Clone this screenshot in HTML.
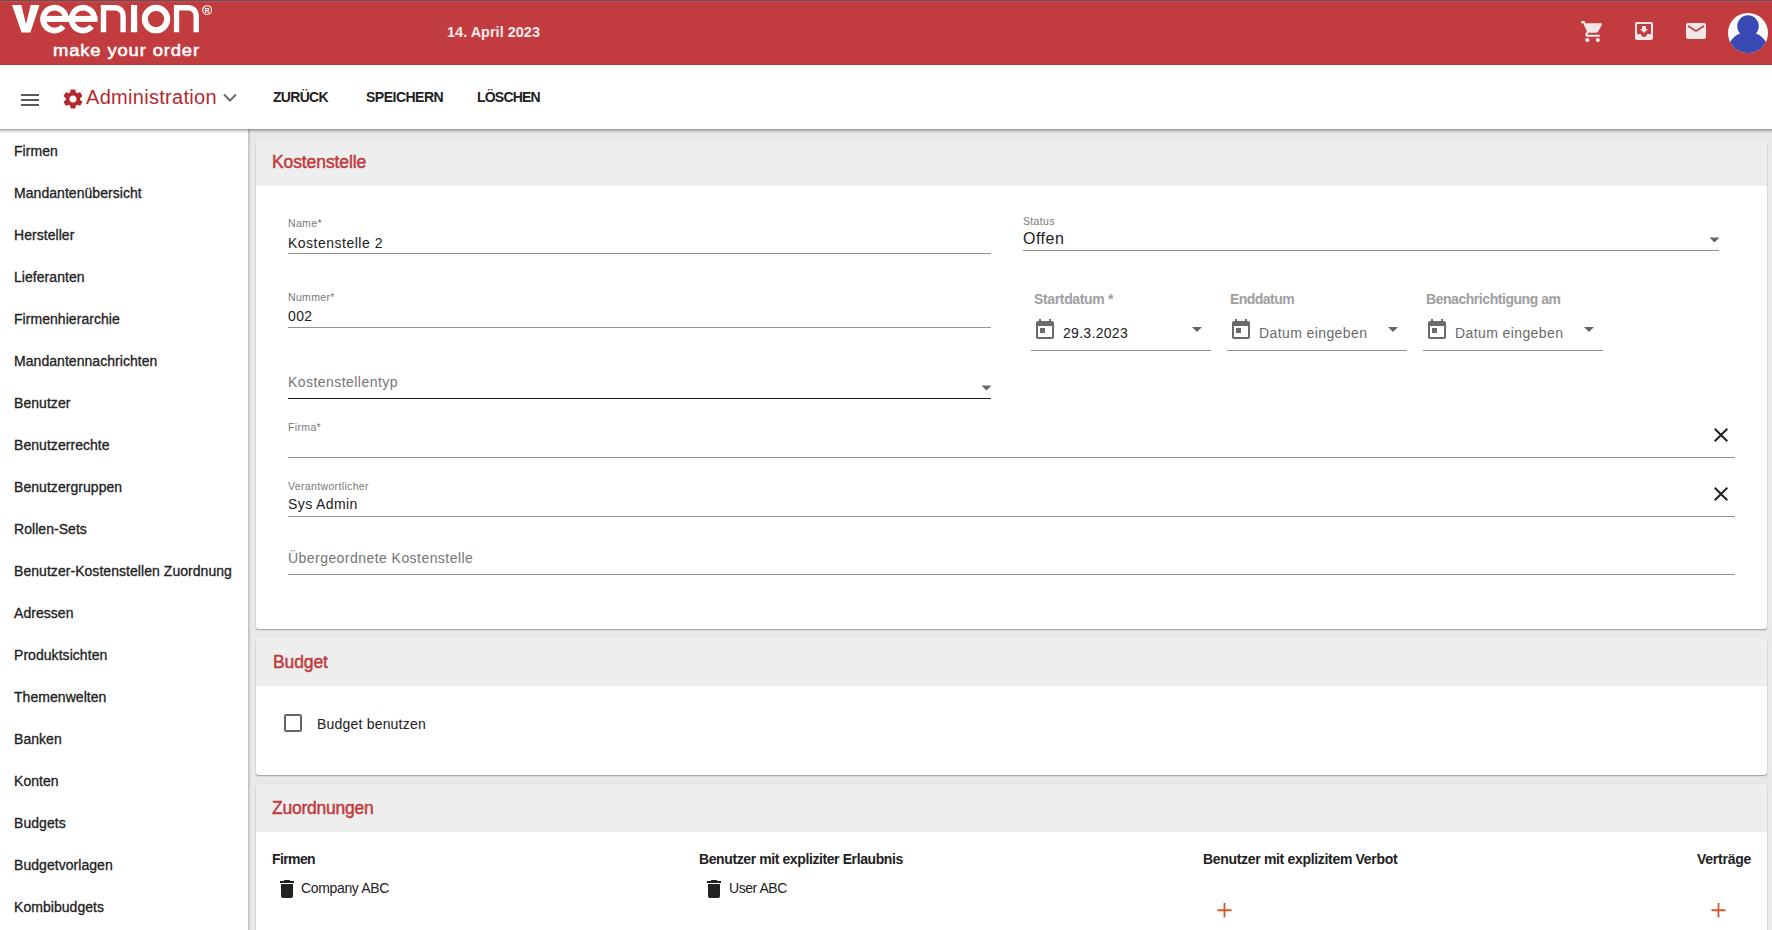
<!DOCTYPE html>
<html><head><meta charset="utf-8">
<style>
*{box-sizing:border-box;margin:0;padding:0}
html,body{width:1772px;height:930px;overflow:hidden;background:#fff;font-family:"Liberation Sans",sans-serif;color:#212121}
.a{position:absolute;white-space:nowrap}
#top{position:absolute;left:0;top:0;width:1772px;height:65px;background:#c23c3f;border-bottom:1px solid #b73b3d}
#topline{position:absolute;left:0;top:0;width:1772px;height:3px;background:linear-gradient(#86434a 0 1px,#a8535a 1px 2px,#bc4544 2px 3px)}
#tb{position:absolute;left:0;top:65px;width:1772px;height:64px;background:#fff}
#tbshadow{position:absolute;left:0;top:129px;width:1772px;height:5px;background:linear-gradient(rgba(0,0,0,0.32) 0 1px,rgba(0,0,0,0.2) 1px 2px,rgba(0,0,0,0.12) 2px 3px,rgba(0,0,0,0.05) 3px 4px,rgba(0,0,0,0.02) 4px 5px)}
#side{position:absolute;left:0;top:129px;width:248px;height:801px;background:#fff}
#main{position:absolute;left:248px;top:129px;width:1524px;height:801px;background:#e9e9e9}
#sideshadow{position:absolute;left:248px;top:129px;width:4px;height:801px;background:linear-gradient(90deg,#c3c3c3 0 1px,#d6d6d6 1px 2px,#e1e1e1 2px 3px,#e8e8e8 3px 4px)}
.si{position:absolute;left:14px;font-size:14px;-webkit-text-stroke:0.3px #212121;letter-spacing:0.05px;color:#212121;white-space:nowrap;line-height:16px}
.card{position:absolute;left:256px;width:1511px;background:#fff;border-radius:3px;box-shadow:0 1.5px 1.5px -0.5px rgba(0,0,0,0.32),-0.5px 0 1px -0.5px rgba(0,0,0,0.1),0.5px 0 1px -0.5px rgba(0,0,0,0.1)}
.ch{position:absolute;left:0;top:0;width:100%;background:#eeeeee;border-radius:3px 3px 0 0}
.ct{position:absolute;left:16px;font-size:17.5px;color:#c0393b;-webkit-text-stroke:0.45px #c0393b;line-height:20px;white-space:nowrap;letter-spacing:-0.1px}
.lbl{position:absolute;font-size:10.5px;color:#777;white-space:nowrap;line-height:12px;letter-spacing:0.35px}
.val{position:absolute;font-size:14px;color:#212121;white-space:nowrap;line-height:16px;letter-spacing:0.4px}
.ph{position:absolute;font-size:14px;color:#757575;white-space:nowrap;line-height:16px;letter-spacing:0.45px}
.ul{position:absolute;height:1px;background:#929292}
.btn{position:absolute;top:89px;font-size:14px;font-weight:bold;color:#212121;white-space:nowrap;line-height:16px;letter-spacing:-0.4px}
.dl{position:absolute;font-size:14px;font-weight:bold;color:#9e9e9e;white-space:nowrap;line-height:16px;letter-spacing:-0.25px}
.zh{position:absolute;font-size:14px;font-weight:bold;color:#212121;white-space:nowrap;line-height:16px;letter-spacing:0.1px}
svg{position:absolute;overflow:visible}

</style></head><body>
<div id="top"></div>
<div id="topline"></div>
<!-- logo -->
<svg style="left:0;top:0" width="230" height="64" viewBox="0 0 230 64">
 <g fill="#fff">
  <polygon points="12,5 21.3,5 26,24.2 30.7,5 39.5,5 30.4,32.6 21.6,32.6"/>
 </g>
 <g fill="none" stroke="#fff" stroke-width="6.3">
  <path d="M65.9,19 A11.4,11.4 0 1 0 63.2,26.5" stroke-width="5.8"/>
  <path d="M94.4,19 A11.4,11.4 0 1 0 91.7,26.5" stroke-width="5.8"/>
  <circle cx="156" cy="19.1" r="11.2" stroke-width="6.1"/>
 </g>
 <g fill="#fff">
  <rect x="43" y="15.9" width="26" height="6"/>
  <rect x="71.5" y="15.9" width="26" height="6"/>
  <path d="M100.8,5 H115.5 A10.3,10.3 0 0 1 125.8,15.3 V32.2 H120.4 V15.5 A5,5 0 0 0 115.4,10.4 H106.2 V32.2 H100.8 Z"/>
  <polygon points="131,5 137.1,5 137.3,32.2 130.9,32.2"/>
  <path d="M173.9,5 H188.6 A10.3,10.3 0 0 1 198.9,15.3 V32.2 H193.5 V15.5 A5,5 0 0 0 188.5,10.4 H179.2 V32.2 H173.9 Z"/>
 </g>
 <circle cx="207.1" cy="10.1" r="4.4" fill="none" stroke="#fff" stroke-width="1.1"/>
 <text x="207.1" y="12.6" font-size="6.5" font-weight="bold" fill="#fff" text-anchor="middle" font-family="Liberation Sans">R</text>
</svg>
<div class="a" style="left:53px;top:42px;font-size:16px;color:#fff;-webkit-text-stroke:0.5px #fff;line-height:18px;letter-spacing:0.75px;transform:scaleX(1.15);transform-origin:0 0">make your order</div>
<div class="a" style="left:447px;top:23px;font-size:14.5px;font-weight:bold;color:#fbeaea;line-height:18px">14. April 2023</div>
<!-- header icons -->
<svg style="left:1579.5px;top:18.5px" width="25.2" height="25.2" viewBox="0 0 24 24"><path fill="#f3e6e6" d="M7 18c-1.1 0-1.99.9-1.99 2S5.9 22 7 22s2-.9 2-2-.9-2-2-2zM1 2v2h2l3.6 7.59-1.35 2.45c-.16.28-.25.61-.25.96 0 1.1.9 2 2 2h12v-2H7.420c-.14 0-.25-.11-.25-.25l.03-.12.9-1.630h7.45c.75 0 1.41-.41 1.75-1.03l3.58-6.49c.08-.14.12-.31.12-.48 0-.55-.45-1-1-1H5.21l-.94-2H1zm16 16c-1.1 0-1.99.9-1.99 2s.89 2 1.99 2 2-.9 2-2-.9-2-2-2z"/></svg>
<svg style="left:1632px;top:19px" width="24" height="24" viewBox="0 0 24 24"><path fill="#f3e6e6" d="M19 3H4.99c-1.11 0-1.98.9-1.98 2L3 19c0 1.1.88 2 1.99 2H19c1.1 0 2-.9 2-2V5c0-1.1-.9-2-2-2zm0 12h-4c0 1.66-1.35 3-3 3s-3-1.34-3-3H4.99V5H19v10zm-3-5h-2V7h-4v3H8l4 4 4-4z"/></svg>
<svg style="left:1684px;top:19px" width="24" height="24" viewBox="0 0 24 24"><path fill="#f3e6e6" d="M20 4H4c-1.1 0-1.99.9-1.99 2L2 18c0 1.1.9 2 2 2h16c1.1 0 2-.9 2-2V6c0-1.1-.9-2-2-2zm0 4l-8 5-8-5V6l8 5 8-5v2z"/></svg>
<svg style="left:1728px;top:12.7px" width="40" height="40" viewBox="0 0 40 40">
 <defs><clipPath id="cc"><circle cx="20" cy="20" r="20"/></clipPath></defs>
 <circle cx="20" cy="20" r="20" fill="#fff"/>
 <g clip-path="url(#cc)" fill="#3a49b3">
  <circle cx="20" cy="13.1" r="10.8"/>
  <ellipse cx="20" cy="36" rx="19.5" ry="17"/>
 </g>
</svg>

<div id="tb"></div>
<div id="side"></div>
<div id="main"></div>
<div id="sideshadow"></div>
<div id="tbshadow"></div>

<!-- toolbar -->
<svg style="left:18px;top:88px" width="24" height="24" viewBox="0 0 24 24"><path fill="#5a5a5a" d="M3 18h18v-2H3v2zm0-5h18v-2H3v2zm0-7v2h18V6H3z"/></svg>
<svg style="left:61px;top:87px" width="24" height="24" viewBox="0 0 24 24"><path fill="#b5292e" d="M19.14 12.94c.04-.3.06-.61.06-.94 0-.32-.02-.64-.07-.94l2.03-1.580c.18-.14.23-.41.12-.61l-1.92-3.32c-.12-.22-.37-.29-.59-.22l-2.39.96c-.5-.38-1.03-.7-1.62-.94l-.36-2.54c-.04-.24-.24-.41-.48-.41h-3.84c-.24 0-.43.17-.47.41l-.36 2.54c-.59.24-1.13.57-1.62.94l-2.39-.96c-.22-.08-.47 0-.59.22L2.74 8.870c-.12.21-.08.47.12.61l2.03 1.58c-.05.3-.09.63-.09.94s.02.64.07.94l-2.03 1.58c-.18.14-.23.41-.12.61l1.92 3.32c.12.22.37.29.59.22l2.39-.96c.5.38 1.03.7 1.62.94l.36 2.54c.05.24.24.41.48.41h3.84c.24 0 .44-.17.47-.41l.36-2.54c.59-.24 1.13-.56 1.62-.94l2.39.96c.22.08.47 0 .59-.22l1.92-3.32c.12-.22.07-.47-.12-.61l-2.01-1.58zM12 15.6c-1.98 0-3.6-1.62-3.6-3.6s1.62-3.6 3.6-3.6 3.6 1.62 3.6 3.6-1.62 3.6-3.6 3.6z"/></svg>
<div class="a" style="left:86px;top:85px;font-size:20px;color:#b5292e;line-height:24px;letter-spacing:0.3px">Administration</div>
<svg style="left:222px;top:92px" width="16" height="12" viewBox="0 0 16 12"><polyline points="2,2.5 8,8.5 14,2.5" fill="none" stroke="#6a6a6a" stroke-width="2"/></svg>
<div class="btn" style="left:273px;letter-spacing:-0.7px">ZURÜCK</div>
<div class="btn" style="left:366px;letter-spacing:-0.5px">SPEICHERN</div>
<div class="btn" style="left:477px;letter-spacing:-0.8px">LÖSCHEN</div>

<div class="si" style="top:143px">Firmen</div>
<div class="si" style="top:185px">Mandantenübersicht</div>
<div class="si" style="top:227px">Hersteller</div>
<div class="si" style="top:269px">Lieferanten</div>
<div class="si" style="top:311px">Firmenhierarchie</div>
<div class="si" style="top:353px">Mandantennachrichten</div>
<div class="si" style="top:395px">Benutzer</div>
<div class="si" style="top:437px">Benutzerrechte</div>
<div class="si" style="top:479px">Benutzergruppen</div>
<div class="si" style="top:521px">Rollen-Sets</div>
<div class="si" style="top:563px">Benutzer-Kostenstellen Zuordnung</div>
<div class="si" style="top:605px">Adressen</div>
<div class="si" style="top:647px">Produktsichten</div>
<div class="si" style="top:689px">Themenwelten</div>
<div class="si" style="top:731px">Banken</div>
<div class="si" style="top:773px">Konten</div>
<div class="si" style="top:815px">Budgets</div>
<div class="si" style="top:857px">Budgetvorlagen</div>
<div class="si" style="top:899px">Kombibudgets</div>

<!-- card 1 -->
<div class="card" style="top:140px;height:489px">
 <div class="ch" style="height:46px"></div>
 <div class="ct" style="top:11.5px">Kostenstelle</div>
</div>
<div class="lbl" style="left:288px;top:217px">Name*</div>
<div class="val" style="left:288px;top:234.5px;letter-spacing:0.5px">Kostenstelle 2</div>
<div class="ul" style="left:288px;top:253px;width:703px"></div>

<div class="lbl" style="left:1023px;top:215px">Status</div>
<div class="val" style="left:1023px;top:230px;font-size:16px;line-height:18px;letter-spacing:0.5px">Offen</div>
<svg style="left:1708.5px;top:237px" width="12" height="6" viewBox="0 0 12 6"><polygon points="0.5,0.5 10.5,0.5 5.5,5.5" fill="#666"/></svg>
<div class="ul" style="left:1023px;top:250px;width:696px"></div>

<div class="lbl" style="left:288px;top:291px">Nummer*</div>
<div class="val" style="left:288px;top:308px">002</div>
<div class="ul" style="left:288px;top:327px;width:703px"></div>

<div class="dl" style="left:1034px;top:291px;letter-spacing:-0.35px">Startdatum *</div>
<div class="dl" style="left:1230px;top:291px;letter-spacing:-0.55px">Enddatum</div>
<div class="dl" style="left:1426px;top:291px;letter-spacing:-0.45px">Benachrichtigung am</div>
<svg style="left:1033px;top:318px" width="24" height="24" viewBox="0 0 24 24"><path fill="#6b6b6b" d="M19 3h-1V1h-2v2H8V1H6v2H5c-1.11 0-1.99.9-1.99 2L3 19c0 1.1.89 2 2 2h14c1.1 0 2-.9 2-2V5c0-1.1-.9-2-2-2zm0 16H5V8h14v11zM7 10h5v5H7z"/></svg>
<svg style="left:1229px;top:318px" width="24" height="24" viewBox="0 0 24 24"><path fill="#6b6b6b" d="M19 3h-1V1h-2v2H8V1H6v2H5c-1.11 0-1.99.9-1.99 2L3 19c0 1.1.89 2 2 2h14c1.1 0 2-.9 2-2V5c0-1.1-.9-2-2-2zm0 16H5V8h14v11zM7 10h5v5H7z"/></svg>
<svg style="left:1425px;top:318px" width="24" height="24" viewBox="0 0 24 24"><path fill="#6b6b6b" d="M19 3h-1V1h-2v2H8V1H6v2H5c-1.11 0-1.99.9-1.99 2L3 19c0 1.1.89 2 2 2h14c1.1 0 2-.9 2-2V5c0-1.1-.9-2-2-2zm0 16H5V8h14v11zM7 10h5v5H7z"/></svg>
<div class="val" style="left:1063px;top:325px;letter-spacing:0.3px">29.3.2023</div>
<div class="ph" style="left:1259px;top:325px;color:#6a6a6a;letter-spacing:0.4px">Datum eingeben</div>
<div class="ph" style="left:1455px;top:325px;color:#6a6a6a;letter-spacing:0.4px">Datum eingeben</div>
<svg style="left:1192px;top:327px" width="10" height="6" viewBox="0 0 10 6"><polygon points="0,0 10,0 5,5" fill="#666"/></svg>
<svg style="left:1388px;top:327px" width="10" height="6" viewBox="0 0 10 6"><polygon points="0,0 10,0 5,5" fill="#666"/></svg>
<svg style="left:1584px;top:327px" width="10" height="6" viewBox="0 0 10 6"><polygon points="0,0 10,0 5,5" fill="#666"/></svg>
<div class="ul" style="left:1031px;top:350px;width:180px"></div>
<div class="ul" style="left:1227px;top:350px;width:180px"></div>
<div class="ul" style="left:1423px;top:350px;width:180px"></div>

<div class="ph" style="left:288px;top:374px">Kostenstellentyp</div>
<svg style="left:980.5px;top:385px" width="12" height="6" viewBox="0 0 12 6"><polygon points="0.5,0.5 10.5,0.5 5.5,5.5" fill="#666"/></svg>
<div class="ul" style="left:288px;top:397.6px;width:703px;height:1.6px;background:#1a1a1a"></div>

<div class="lbl" style="left:288px;top:421px">Firma*</div>
<svg style="left:1709px;top:423px" width="24" height="24" viewBox="0 0 24 24"><path fill="#222" d="M19 6.41L17.59 5 12 10.59 6.41 5 5 6.41 10.59 12 5 17.59 6.41 19 12 13.41 17.59 19 19 17.59 13.41 12z"/></svg>
<div class="ul" style="left:288px;top:457px;width:1447px"></div>

<div class="lbl" style="left:288px;top:480px">Verantwortlicher</div>
<div class="val" style="left:288px;top:496px">Sys Admin</div>
<svg style="left:1709px;top:482px" width="24" height="24" viewBox="0 0 24 24"><path fill="#222" d="M19 6.41L17.59 5 12 10.59 6.41 5 5 6.41 10.59 12 5 17.59 6.41 19 12 13.41 17.59 19 19 17.59 13.41 12z"/></svg>
<div class="ul" style="left:288px;top:516px;width:1447px"></div>

<div class="ph" style="left:288px;top:550px">Übergeordnete Kostenstelle</div>
<div class="ul" style="left:288px;top:574px;width:1447px"></div>

<!-- card 2 -->
<div class="card" style="top:638px;height:137px">
 <div class="ch" style="height:48px"></div>
 <div class="ct" style="top:14.3px;left:17px">Budget</div>
</div>
<div class="a" style="left:284px;top:714px;width:18px;height:18px;border:2px solid #666;border-radius:2px"></div>
<div class="val" style="left:317px;top:716px;letter-spacing:0.2px">Budget benutzen</div>

<!-- card 3 -->
<div class="card" style="top:784px;height:160px">
 <div class="ch" style="height:48px"></div>
 <div class="ct" style="top:14px;letter-spacing:-0.25px">Zuordnungen</div>
</div>
<div class="zh" style="left:272px;top:851px;letter-spacing:-0.6px">Firmen</div>
<div class="zh" style="left:699px;top:851px;letter-spacing:-0.4px">Benutzer mit expliziter Erlaubnis</div>
<div class="zh" style="left:1203px;top:851px;letter-spacing:-0.32px">Benutzer mit explizitem Verbot</div>
<div class="zh" style="left:1697px;top:851px;letter-spacing:-0.25px">Verträge</div>
<svg style="left:275px;top:877px" width="24" height="24" viewBox="0 0 24 24"><path fill="#222" d="M6 19c0 1.1.9 2 2 2h8c1.1 0 2-.9 2-2V7H6v12zM19 4h-3.5l-1-1h-5l-1 1H5v2h14V4z"/></svg>
<svg style="left:702px;top:877px" width="24" height="24" viewBox="0 0 24 24"><path fill="#222" d="M6 19c0 1.1.9 2 2 2h8c1.1 0 2-.9 2-2V7H6v12zM19 4h-3.5l-1-1h-5l-1 1H5v2h14V4z"/></svg>
<div class="val" style="left:301px;top:880px;font-size:14px;letter-spacing:-0.35px">Company ABC</div>
<div class="val" style="left:729px;top:880px;font-size:14px;letter-spacing:-0.45px">User ABC</div>
<svg style="left:1217px;top:903px" width="15" height="15" viewBox="0 0 15 15"><path d="M7.5 0V14.5M0.5 7.25H14.5" stroke="#d2572a" stroke-width="1.8" fill="none"/></svg>
<svg style="left:1711px;top:903px" width="15" height="15" viewBox="0 0 15 15"><path d="M7.5 0V14.5M0.5 7.25H14.5" stroke="#d2572a" stroke-width="1.8" fill="none"/></svg>

</body></html>
